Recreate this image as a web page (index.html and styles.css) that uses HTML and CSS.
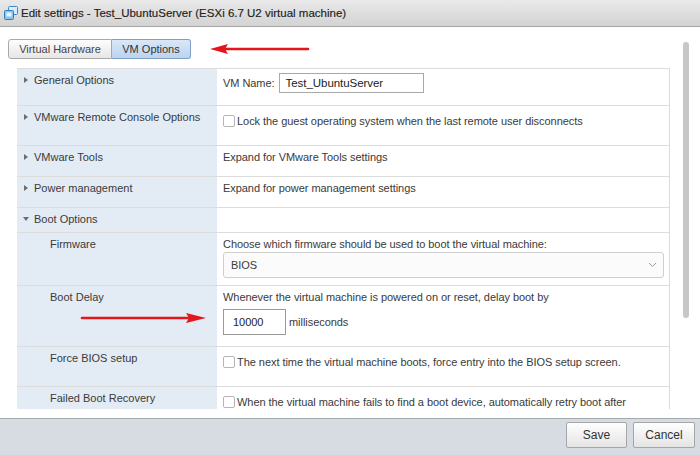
FILE: index.html
```html
<!DOCTYPE html>
<html>
<head>
<meta charset="utf-8">
<link rel="stylesheet" href="styles.css">
</head>
<body>
<div class="window">
  <div class="titlebar">
    <svg class="title-icon" width="14" height="14" viewBox="0 0 14 14">
      <rect x="4.5" y="0.5" width="9" height="8" rx="1" fill="#d9ecfa" stroke="#3b8ccc"/>
      <rect x="0.5" y="4.5" width="9" height="9" rx="1" fill="#8cc3ea" stroke="#2f7fc0"/>
      <rect x="2.5" y="6.5" width="5" height="4" fill="#e9f4fc"/>
    </svg>
    <span class="title-text">Edit settings - Test_UbuntuServer (ESXi 6.7 U2 virtual machine)</span>
  </div>
  <div class="body">
    <div class="content">
      <div class="tabs">
        <div class="tab">Virtual Hardware</div>
        <div class="tab tab--active">VM Options</div>
      </div>
      <div class="table">
        <div class="row row--name">
          <div class="cell-label"><span class="tri tri--right"></span>General Options</div>
          <div class="cell-value inline">
            <span>VM Name:</span>
            <span class="textbox textbox--name">Test_UbuntuServer</span>
          </div>
        </div>
        <div class="row row--check">
          <div class="cell-label"><span class="tri tri--right"></span>VMware Remote Console Options</div>
          <div class="cell-value cell-value--check"><span class="checkbox"></span>Lock the guest operating system when the last remote user disconnects</div>
        </div>
        <div class="row row--plain">
          <div class="cell-label"><span class="tri tri--right"></span>VMware Tools</div>
          <div class="cell-value">Expand for VMware Tools settings</div>
        </div>
        <div class="row row--plain">
          <div class="cell-label"><span class="tri tri--right"></span>Power management</div>
          <div class="cell-value">Expand for power management settings</div>
        </div>
        <div class="row row--group">
          <div class="cell-label"><span class="tri tri--down"></span>Boot Options</div>
          <div class="cell-value"></div>
        </div>
        <div class="row row--firmware">
          <div class="cell-label cell-label--sub">Firmware</div>
          <div class="cell-value">
            <div>Choose which firmware should be used to boot the virtual machine:</div>
            <div class="select">
              <span>BIOS</span>
              <svg width="9" height="6" viewBox="0 0 9 6"><path d="M1 1 L4.5 4.5 L8 1" fill="none" stroke="#9a9a9a" stroke-width="1"/></svg>
            </div>
          </div>
        </div>
        <div class="row row--delay">
          <div class="cell-label cell-label--sub">Boot Delay</div>
          <div class="cell-value">
            <div>Whenever the virtual machine is powered on or reset, delay boot by</div>
            <div class="inline delay-line">
              <span class="textbox textbox--delay">10000</span>
              <span>milliseconds</span>
            </div>
          </div>
        </div>
        <div class="row row--check">
          <div class="cell-label cell-label--sub">Force BIOS setup</div>
          <div class="cell-value cell-value--check"><span class="checkbox"></span>The next time the virtual machine boots, force entry into the BIOS setup screen.</div>
        </div>
        <div class="row row--check">
          <div class="cell-label cell-label--sub">Failed Boot Recovery</div>
          <div class="cell-value cell-value--check"><span class="checkbox"></span>When the virtual machine fails to find a boot device, automatically retry boot after</div>
        </div>
      </div>
    </div>
    <div class="scrollbar"></div>
    <svg class="arrow arrow--tabs" width="100" height="12" viewBox="0 0 100 12">
      <path d="M14 6 H98" stroke="#e3161b" stroke-width="2.6" stroke-linecap="round"/>
      <path d="M0 6 L18 1 L15 6 L18 11 Z" fill="#e3161b"/>
    </svg>
    <svg class="arrow arrow--delay" width="126" height="12" viewBox="0 0 126 12">
      <path d="M2 6 H112" stroke="#e3161b" stroke-width="2.6" stroke-linecap="round"/>
      <path d="M126 6 L106 1 L109 6 L106 11 Z" fill="#e3161b"/>
    </svg>
  </div>
  <div class="footer">
    <div class="btn btn--save">Save</div>
    <div class="btn btn--cancel">Cancel</div>
  </div>
</div>
</body>
</html>
```

FILE: styles.css
```css
* { box-sizing: border-box; }
html, body { margin: 0; padding: 0; }
body {
  width: 700px;
  height: 455px;
  overflow: hidden;
  font-family: "Liberation Sans", Arial, sans-serif;
  font-size: 11px;
  line-height: 14px;
  color: #333;
  background: #fff;
}
.window {
  width: 700px;
  height: 455px;
  display: flex;
  flex-direction: column;
}
.titlebar {
  height: 27px;
  flex: none;
  display: flex;
  align-items: center;
  gap: 3px;
  padding: 0 0 1px 4px;
  background: linear-gradient(#e9e9e9, #d3d3d3);
  border-bottom: 1px solid #a5a5a5;
}
.title-text {
  font-size: 11.5px;
  color: #222;
  -webkit-text-stroke: 0.15px #222;
}
.body {
  flex: 1;
  min-height: 0;
  position: relative;
  display: flex;
  padding: 12px 11px 9px 8px;
}
.content {
  flex: 1;
  min-width: 0;
  display: flex;
  flex-direction: column;
}
.tabs {
  display: flex;
  height: 20px;
  flex: none;
}
.tab {
  width: 104px;
  height: 20px;
  display: flex;
  align-items: center;
  justify-content: center;
  border: 1px solid #a9a9a9;
  border-radius: 3px 0 0 3px;
  background: linear-gradient(#fdfdfd, #e6e6e6);
  color: #444;
}
.tab--active {
  width: 79px;
  border-color: #7f9fc4;
  border-left: none;
  border-radius: 0 3px 3px 0;
  background: linear-gradient(#dae7f7, #bcd3ef);
  color: #333;
}
.table {
  flex: 1;
  min-height: 0;
  overflow: hidden;
  margin: 9px 0 0 9px;
  border-top: 1px solid #dcdcdc;
  border-right: 1px solid #dcdcdc;
}
.row {
  display: grid;
  grid-template-columns: 200px 1fr;
  border-bottom: 1px solid #dcdcdc;
}
.row--name { min-height: 37px; }
.row--check { min-height: 40px; }
.row--plain { min-height: 31px; }
.row--group { min-height: 25px; }
.row--firmware { min-height: 53px; }
.row--delay { min-height: 61px; }
.cell-label {
  background: #e3ecf5;
  padding: 4px 6px 0 6px;
  display: flex;
  align-items: flex-start;
  color: #3a3a3a;
}
.cell-label--sub { padding-left: 33px; }
.tri {
  width: 0;
  height: 0;
  margin-top: 4px;
  margin-right: 6px;
}
.tri--right {
  margin-left: 1px;
  margin-right: 6px;
  border-left: 4px solid #6d6d6d;
  border-top: 3px solid transparent;
  border-bottom: 3px solid transparent;
}
.tri--down {
  margin-top: 5px;
  margin-right: 5px;
  border-top: 4px solid #6d6d6d;
  border-left: 3px solid transparent;
  border-right: 3px solid transparent;
}
.cell-value {
  padding: 4px 6px 0 6px;
  color: #3a3a3a;
  letter-spacing: -0.05px;
}
.cell-value--check {
  padding-top: 8px;
  display: flex;
  align-items: center;
  height: fit-content;
}
.inline {
  display: flex;
  align-items: center;
  align-self: start;
}
.row--name .cell-value { gap: 4px; }
.textbox {
  display: flex;
  align-items: center;
  border: 1px solid #a9a9a9;
  background: #fff;
  color: #222;
}
.textbox--name {
  width: 145px;
  height: 20px;
  padding-left: 6px;
  font-size: 11.5px;
}
.checkbox {
  width: 12px;
  height: 12px;
  flex: none;
  border: 1px solid #b5b5b5;
  border-radius: 2px;
  background: #fff;
  margin-right: 2px;
}
.select {
  margin-top: 1px;
  height: 26px;
  width: 441px;
  border: 1px solid #cfcfcf;
  border-radius: 3px;
  background: #fbfbfb;
  display: flex;
  align-items: center;
  justify-content: space-between;
  padding: 0 6px 0 7px;
}
.delay-line {
  margin-top: 5px;
  gap: 3px;
}
.textbox--delay {
  width: 63px;
  height: 26px;
  padding-left: 9px;
  border-color: #9a9a9a;
}
.scrollbar {
  flex: none;
  width: 6px;
  height: 276px;
  margin: 3px 0 0 13px;
  border-radius: 3px;
  background: #c7c7c7;
}
.arrow {
  position: absolute;
}
.arrow--tabs {
  left: 210px;
  top: 16px;
}
.arrow--delay {
  left: 80px;
  top: 285px;
}
.footer {
  height: 37px;
  flex: none;
  border-top: 1px solid #a4a9ae;
  background: #d6dce2;
  display: flex;
  justify-content: flex-end;
  align-items: flex-start;
  gap: 6px;
  padding: 3px 5px 0 0;
}
.btn {
  height: 26px;
  display: flex;
  align-items: center;
  justify-content: center;
  border: 1px solid #a6a6a6;
  border-radius: 2px;
  background: linear-gradient(#fefefe, #e4e4e4);
  font-size: 12px;
  color: #333;
}
.btn--save { width: 61px; }
.btn--cancel { width: 62px; }
```
